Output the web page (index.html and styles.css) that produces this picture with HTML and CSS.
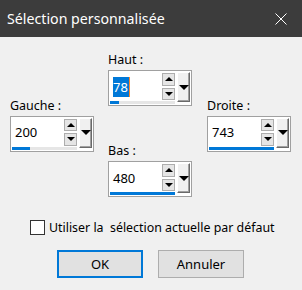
FILE: index.html
```html
<!DOCTYPE html>
<html lang="fr">
<head>
    <meta charset="UTF-8">
    <title>Sélection personnalisée</title>
    <link rel="stylesheet" href="styles.css">
</head>
<body>

<div class="titlebar">
    <span class="title">Sélection personnalisée</span>
    <svg class="close" width="12" height="12" viewBox="0 0 12 12">
        <path d="M0.5 0.5 L11.5 11.5 M11.5 0.5 L0.5 11.5" stroke="#fff" stroke-width="1" fill="none"/>
    </svg>
</div>

<div class="content">
    <div class="fields">
        <div class="field">
            <label>Gauche :</label>
            <div class="spin">
                <div class="spin-main">
                    <div class="spin-row">
                        <span class="value">200</span>
                        <div class="arrows">
                            <span class="arrow up"></span>
                            <span class="arrow down"></span>
                        </div>
                    </div>
                    <div class="track"><div class="fill" style="width: 27%"></div></div>
                </div>
                <div class="drop"></div>
            </div>
        </div>

        <div class="middle">
            <div class="field">
                <label>Haut :</label>
                <div class="spin">
                    <div class="spin-main">
                        <div class="spin-row">
                            <span class="value"><span class="selected">78</span></span>
                            <div class="arrows">
                                <span class="arrow up"></span>
                                <span class="arrow down"></span>
                            </div>
                        </div>
                        <div class="track"><div class="fill" style="width: 14%"></div></div>
                    </div>
                    <div class="drop"></div>
                </div>
            </div>
            <div class="field">
                <label>Bas :</label>
                <div class="spin">
                    <div class="spin-main">
                        <div class="spin-row">
                            <span class="value">480</span>
                            <div class="arrows">
                                <span class="arrow up"></span>
                                <span class="arrow down"></span>
                            </div>
                        </div>
                        <div class="track"><div class="fill" style="width: 100%"></div></div>
                    </div>
                    <div class="drop"></div>
                </div>
            </div>
        </div>

        <div class="field">
            <label>Droite :</label>
            <div class="spin">
                <div class="spin-main">
                    <div class="spin-row">
                        <span class="value">743</span>
                        <div class="arrows">
                            <span class="arrow up"></span>
                            <span class="arrow down"></span>
                        </div>
                    </div>
                    <div class="track"><div class="fill" style="width: 100%"></div></div>
                </div>
                <div class="drop"></div>
            </div>
        </div>
    </div>

    <div class="check">
        <span class="box"></span>
        <span class="check-label">Utiliser la  sélection actuelle par défaut</span>
    </div>

    <div class="buttons">
        <button class="btn default">OK</button>
        <button class="btn">Annuler</button>
    </div>
</div>

</body>
</html>
```

FILE: styles.css
```css
body {
    margin: 0;
    width: 302px;
    height: 290px;
    background: #f0f0f0;
    font-family: "Segoe UI", "Noto Sans", sans-serif;
    font-size: 12.5px;
    color: #000;
    overflow: hidden;
}
.titlebar {
    height: 37px;
    background: #3c3c3c;
    display: flex;
    align-items: center;
    justify-content: space-between;
    padding: 0 15px 0 7px;
}
.title {
    color: #fff;
    font-size: 14.2px;
}
.close {
    display: block;
}
.content {
    padding-top: 15px;
}
.fields {
    display: flex;
    align-items: center;
    padding-left: 10px;
}
.field {
    width: 84px;
    display: flex;
    flex-direction: column;
}
.middle {
    display: flex;
    flex-direction: column;
    gap: 37px;
    margin: 0 15px 0 14px;
}
.field label {
    line-height: 16px;
    height: 16px;
    margin-bottom: 2px;
}
.spin {
    height: 36px;
    box-sizing: border-box;
    border: 1px solid #a0a0a0;
    background: #fff;
    display: flex;
    padding: 1px;
}
.spin-main {
    flex: 1;
    display: flex;
    flex-direction: column;
}
.spin-row {
    flex: 1;
    display: flex;
}
.value {
    flex: 1;
    display: flex;
    align-items: center;
    padding-left: 3px;
    font-size: 13px;
}
.selected {
    background: #0078d7;
    color: #fff;
    line-height: 20px;
    padding-right: 1px;
    border-right: 1px solid #ff8728;
}
.arrows {
    width: 13px;
    display: flex;
    flex-direction: column;
    gap: 2px;
    padding: 1px 0;
}
.arrow {
    flex: 1;
    box-sizing: border-box;
    border: 1px solid #adadad;
    background: #e5e5e5;
    display: flex;
    align-items: center;
    justify-content: center;
}
.arrow::after {
    content: "";
    border-left: 4px solid transparent;
    border-right: 4px solid transparent;
}
.arrow.up::after {
    border-bottom: 4px solid #000;
}
.arrow.down::after {
    border-top: 4px solid #000;
}
.track {
    height: 3px;
    background: #e6e6e6;
}
.fill {
    height: 3px;
    background: #0078d7;
}
.drop {
    width: 13px;
    margin: 0 0 2px 2px;
    box-sizing: border-box;
    background: #f0f0f0;
    border: 1px solid;
    border-color: #fff #696969 #696969 #fff;
    box-shadow: inset -1px -1px #a0a0a0;
    display: flex;
    align-items: center;
    justify-content: center;
}
.drop::after {
    content: "";
    border-left: 5px solid transparent;
    border-right: 5px solid transparent;
    border-top: 5px solid #000;
}
.check {
    display: flex;
    align-items: center;
    margin: 21px 0 0 30px;
    height: 19px;
}
.check .box {
    width: 15px;
    height: 15px;
    box-sizing: border-box;
    border: 1px solid #333;
    background: #fff;
    margin-right: 4px;
}
.check-label {
    white-space: pre;
    font-size: 12.4px;
}
.buttons {
    display: flex;
    gap: 15px;
    margin: 13px 0 0 57px;
}
.btn {
    width: 86px;
    height: 28px;
    box-sizing: border-box;
    border: 1px solid #adadad;
    background: #e1e1e1;
    font-family: inherit;
    font-size: 13px;
    color: #000;
    padding: 0;
}
.btn.default {
    border: 2px solid #0078d7;
}
```
